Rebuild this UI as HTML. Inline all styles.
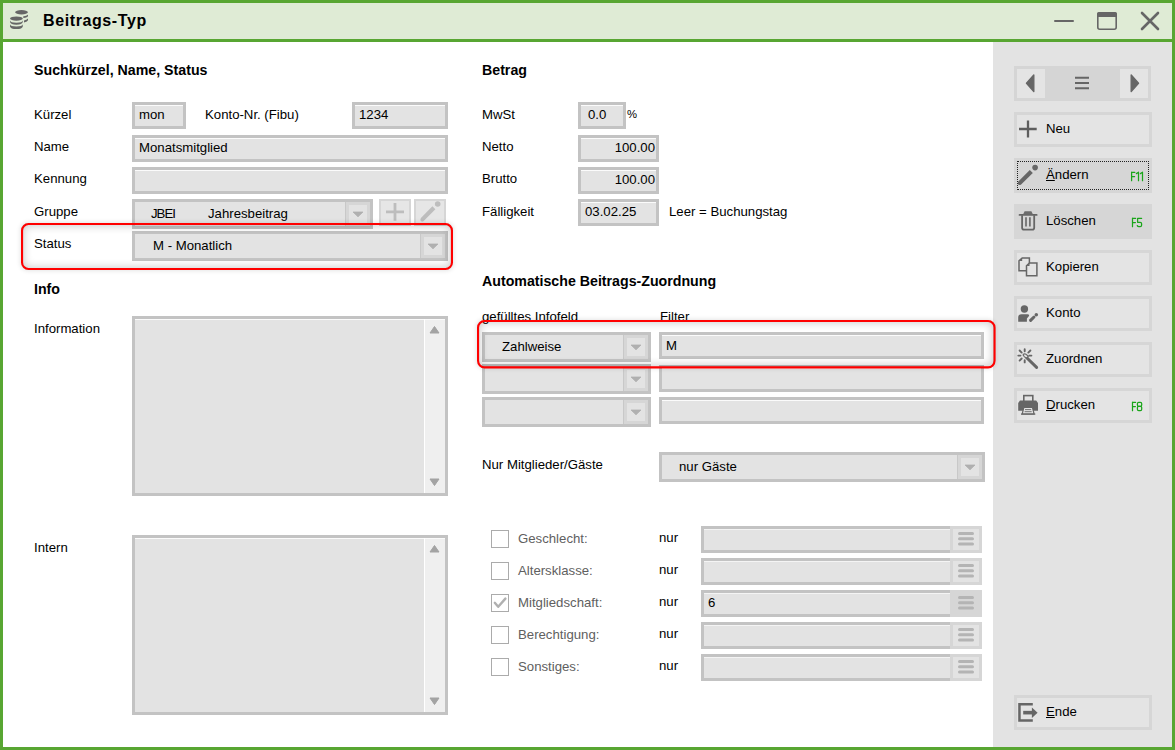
<!DOCTYPE html>
<html><head><meta charset="utf-8"><title>Beitrags-Typ</title>
<style>
*{box-sizing:border-box}
html,body{margin:0;padding:0;width:1175px;height:750px;overflow:hidden;background:#fff}
body{position:relative;font-family:"Liberation Sans",sans-serif}
.a{position:absolute}
.t{position:absolute;font-size:13.2px;line-height:16px;color:#000;white-space:nowrap}
.h{position:absolute;font-size:14.2px;line-height:16px;font-weight:bold;color:#000;white-space:nowrap}
.g{color:#606060}
.inp{position:absolute;border:3px solid #c3c3c3;background:#e3e3e3;box-shadow:inset 0 1px 0 #fbfbfb}
.cb{position:absolute;border:3px solid #c3c3c3;background:#e3e3e3}
.btn{position:absolute;background:#d6d6d6}
.btn i{position:absolute;left:3px;top:3px;right:3px;bottom:3px;background:#e3e3e3}
.sb{position:absolute;border:3px solid #d6d6d6;background:#e4e4e4}
.sb.p{background:#d6d6d6;border-color:#d6d6d6}
.k{position:absolute;width:18px;height:18px;border:1.5px solid #ababab;background:#fff}
.red{position:absolute;border:2.5px solid #ff0000;border-radius:7px;box-shadow:inset 0 0 5px 2px rgba(0,0,0,0.10),0 0 4px 1px rgba(0,0,0,0.06)}
</style></head><body>
<!-- window frame -->
<div class="a" style="left:0;top:0;width:1175px;height:750px;border:3px solid #58a632;border-top-width:3px"></div>
<div class="a" style="left:3px;top:3px;width:1169px;height:36px;background:#dfebd5"></div>
<div class="a" style="left:0;top:39px;width:1175px;height:3px;background:#58a632"></div>
<!-- sidebar -->
<div class="a" style="left:993px;top:42px;width:179px;height:705px;background:#e3e3e3"></div>

<div class="h" style="left:43px;top:10.5px;font-size:16px;line-height:20px;letter-spacing:0.6px">Beitrags-Typ</div>
<div class="h" style="left:34px;top:62px;">Suchkürzel, Name, Status</div>
<div class="t" style="left:34px;top:107px;">Kürzel</div>
<div class="inp" style="left:132px;top:102px;width:54px;height:27px;"></div>
<div class="t" style="left:139px;top:107px;">mon</div>
<div class="t" style="left:205px;top:107px;">Konto-Nr. (Fibu)</div>
<div class="inp" style="left:352px;top:102px;width:96px;height:27px;"></div>
<div class="t" style="left:359px;top:107px;">1234</div>
<div class="t" style="left:34px;top:139px;">Name</div>
<div class="inp" style="left:132px;top:135px;width:316px;height:27px;"></div>
<div class="t" style="left:139px;top:140px;">Monatsmitglied</div>
<div class="t" style="left:34px;top:171px;">Kennung</div>
<div class="inp" style="left:132px;top:167px;width:316px;height:27px;"></div>
<div class="t" style="left:34px;top:204px;">Gruppe</div>
<div class="cb" style="left:132px;top:199px;width:241px;height:30px;"></div>
<div class="a" style="left:345px;top:202px;width:1px;height:24px;background:#c8c8c8"></div>
<div class="btn" style="left:346px;top:202px;width:24px;height:24px"><i></i></div>
<svg class="a" style="left:352.0px;top:211.0px" width="12" height="6.8"><path d="M1 1 L11 1 L6.0 5.8 Z" fill="#b0b0b0" stroke="#b0b0b0" stroke-width="0.8" stroke-linejoin="round"/></svg>
<div class="t" style="left:151px;top:206px;letter-spacing:-1px">JBEI</div>
<div class="t" style="left:208px;top:206px;">Jahresbeitrag</div>
<div class="btn" style="left:379px;top:199px;width:32px;height:27px"><i style="left:2px;top:2px;right:2px;bottom:2px;background:#e6e6e6"></i></div>
<svg class="a" style="left:379px;top:199px" width="32" height="27"><path d="M7 12.9H25M16 4V21.8" stroke="#bdbdbd" stroke-width="2.8"/></svg>
<div class="btn" style="left:414px;top:199px;width:32px;height:27px"><i style="left:2px;top:2px;right:2px;bottom:2px;background:#e6e6e6"></i></div>
<svg class="a" style="left:414px;top:199px" width="32" height="27"><g transform="translate(2.6,-4.6)"><path d="M15.8 11.9L18.8 14.9L7.1 26.5Q5.2 27.6 4.2 26.6Q3.3 25.6 4.3 23.5Z" fill="#bdbdbd"/><circle cx="21.1" cy="9.6" r="2.8" fill="#bdbdbd"/></g></svg>
<div class="t" style="left:34px;top:236px;">Status</div>
<div class="cb" style="left:132px;top:231px;width:316px;height:30px;"></div>
<div class="a" style="left:420px;top:234px;width:1px;height:24px;background:#c8c8c8"></div>
<div class="btn" style="left:421px;top:234px;width:24px;height:24px"><i></i></div>
<svg class="a" style="left:427.0px;top:243.0px" width="12" height="6.8"><path d="M1 1 L11 1 L6.0 5.8 Z" fill="#b0b0b0" stroke="#b0b0b0" stroke-width="0.8" stroke-linejoin="round"/></svg>
<div class="t" style="left:153px;top:238px;">M - Monatlich</div>
<div class="h" style="left:34px;top:281px;">Info</div>
<div class="t" style="left:34px;top:321px;">Information</div>
<div class="inp" style="left:132px;top:316px;width:316px;height:180px;"></div>
<div class="a" style="left:424px;top:319px;width:1px;height:174px;background:#fff"></div>
<div class="a" style="left:425px;top:320px;width:20px;height:173px;background:#efefef"></div>
<svg class="a" style="left:429px;top:325px" width="11" height="9"><path d="M1 8L5.5 1.5L10 8Z" fill="#a3a3a3" stroke="#a3a3a3" stroke-width="1" stroke-linejoin="round"/></svg>
<svg class="a" style="left:429px;top:478px" width="11" height="9"><path d="M1 1L5.5 7.5L10 1Z" fill="#a3a3a3" stroke="#a3a3a3" stroke-width="1" stroke-linejoin="round"/></svg>
<div class="t" style="left:34px;top:540px;">Intern</div>
<div class="inp" style="left:132px;top:535px;width:316px;height:180px;"></div>
<div class="a" style="left:424px;top:538px;width:1px;height:174px;background:#fff"></div>
<div class="a" style="left:425px;top:539px;width:20px;height:173px;background:#efefef"></div>
<svg class="a" style="left:429px;top:544px" width="11" height="9"><path d="M1 8L5.5 1.5L10 8Z" fill="#a3a3a3" stroke="#a3a3a3" stroke-width="1" stroke-linejoin="round"/></svg>
<svg class="a" style="left:429px;top:697px" width="11" height="9"><path d="M1 1L5.5 7.5L10 1Z" fill="#a3a3a3" stroke="#a3a3a3" stroke-width="1" stroke-linejoin="round"/></svg>
<div class="h" style="left:482px;top:62px;">Betrag</div>
<div class="t" style="left:482px;top:107px;">MwSt</div>
<div class="inp" style="left:578px;top:102px;width:48px;height:27px;"></div>
<div class="t" style="left:588px;top:107px;">0.0</div>
<div class="t" style="left:627px;top:106px;font-size:11.3px">%</div>
<div class="t" style="left:482px;top:139px;">Netto</div>
<div class="inp" style="left:578px;top:135px;width:81px;height:27px;"></div>
<div class="t" style="left:578px;top:140px;width:77px;text-align:right">100.00</div>
<div class="t" style="left:482px;top:171px;">Brutto</div>
<div class="inp" style="left:578px;top:167px;width:81px;height:27px;"></div>
<div class="t" style="left:578px;top:172px;width:77px;text-align:right">100.00</div>
<div class="t" style="left:482px;top:204px;">Fälligkeit</div>
<div class="inp" style="left:578px;top:199px;width:81px;height:27px;"></div>
<div class="t" style="left:585px;top:204px;">03.02.25</div>
<div class="t" style="left:669px;top:204px;">Leer = Buchungstag</div>
<div class="h" style="left:482px;top:273px;">Automatische Beitrags-Zuordnung</div>
<div class="t" style="left:482px;top:309px;">gefülltes Infofeld</div>
<div class="t" style="left:660px;top:309px;">Filter</div>
<div class="cb" style="left:482px;top:332px;width:169px;height:30px;"></div>
<div class="a" style="left:623px;top:335px;width:1px;height:24px;background:#c8c8c8"></div>
<div class="btn" style="left:624px;top:335px;width:24px;height:24px"><i></i></div>
<svg class="a" style="left:630.0px;top:344.0px" width="12" height="6.8"><path d="M1 1 L11 1 L6.0 5.8 Z" fill="#b0b0b0" stroke="#b0b0b0" stroke-width="0.8" stroke-linejoin="round"/></svg>
<div class="t" style="left:502px;top:339px;">Zahlweise</div>
<div class="inp" style="left:659px;top:332px;width:325px;height:27px;"></div>
<div class="t" style="left:666px;top:338px;">M</div>
<div class="cb" style="left:482px;top:364px;width:169px;height:30px;"></div>
<div class="a" style="left:623px;top:367px;width:1px;height:24px;background:#c8c8c8"></div>
<div class="btn" style="left:624px;top:367px;width:24px;height:24px"><i></i></div>
<svg class="a" style="left:630.0px;top:376.0px" width="12" height="6.8"><path d="M1 1 L11 1 L6.0 5.8 Z" fill="#b0b0b0" stroke="#b0b0b0" stroke-width="0.8" stroke-linejoin="round"/></svg>
<div class="inp" style="left:659px;top:365px;width:325px;height:27px;"></div>
<div class="cb" style="left:482px;top:397px;width:169px;height:30px;"></div>
<div class="a" style="left:623px;top:400px;width:1px;height:24px;background:#c8c8c8"></div>
<div class="btn" style="left:624px;top:400px;width:24px;height:24px"><i></i></div>
<svg class="a" style="left:630.0px;top:409.0px" width="12" height="6.8"><path d="M1 1 L11 1 L6.0 5.8 Z" fill="#b0b0b0" stroke="#b0b0b0" stroke-width="0.8" stroke-linejoin="round"/></svg>
<div class="inp" style="left:659px;top:397px;width:325px;height:27px;"></div>
<div class="t" style="left:482px;top:457px;">Nur Mitglieder/Gäste</div>
<div class="cb" style="left:659px;top:452px;width:326px;height:30px;"></div>
<div class="a" style="left:957px;top:455px;width:1px;height:24px;background:#c8c8c8"></div>
<div class="btn" style="left:958px;top:455px;width:24px;height:24px"><i></i></div>
<svg class="a" style="left:964.0px;top:464.0px" width="12" height="6.8"><path d="M1 1 L11 1 L6.0 5.8 Z" fill="#b0b0b0" stroke="#b0b0b0" stroke-width="0.8" stroke-linejoin="round"/></svg>
<div class="t" style="left:679px;top:459px;">nur Gäste</div>
<div class="k" style="left:491px;top:530px"></div>
<div class="t g" style="left:518px;top:531px;">Geschlecht:</div>
<div class="t" style="left:659px;top:530px;">nur</div>
<div class="a" style="left:701px;top:526px;width:249px;height:27px;border:3px solid #c3c3c3;border-right:0;background:#e3e3e3;box-shadow:inset 0 1px 0 #f4f4f4"></div>
<div class="btn" style="left:950px;top:526px;width:32px;height:27px"><i></i></div>
<svg class="a" style="left:950px;top:526px" width="32" height="27"><path d="M9.5 7.5H22.5M9.5 12.8H22.5M9.5 18H22.5" stroke="#b4b4b4" stroke-width="3" stroke-linecap="round"/></svg>
<div class="k" style="left:491px;top:562px"></div>
<div class="t g" style="left:518px;top:563px;">Altersklasse:</div>
<div class="t" style="left:659px;top:562px;">nur</div>
<div class="a" style="left:701px;top:558px;width:249px;height:27px;border:3px solid #c3c3c3;border-right:0;background:#e3e3e3;box-shadow:inset 0 1px 0 #f4f4f4"></div>
<div class="btn" style="left:950px;top:558px;width:32px;height:27px"><i></i></div>
<svg class="a" style="left:950px;top:558px" width="32" height="27"><path d="M9.5 7.5H22.5M9.5 12.8H22.5M9.5 18H22.5" stroke="#b4b4b4" stroke-width="3" stroke-linecap="round"/></svg>
<div class="k" style="left:491px;top:594px"></div>
<div class="t g" style="left:518px;top:595px;">Mitgliedschaft:</div>
<div class="t" style="left:659px;top:594px;">nur</div>
<div class="a" style="left:701px;top:590px;width:249px;height:27px;border:3px solid #c3c3c3;border-right:0;background:#e3e3e3;box-shadow:inset 0 1px 0 #f4f4f4"></div>
<div class="btn" style="left:950px;top:590px;width:32px;height:27px"></div>
<svg class="a" style="left:950px;top:590px" width="32" height="27"><path d="M9.5 7.5H22.5M9.5 12.8H22.5M9.5 18H22.5" stroke="#b4b4b4" stroke-width="3" stroke-linecap="round"/></svg>
<svg class="a" style="left:491px;top:594px" width="18" height="18"><path d="M3.8 8.8L7.2 12.8L14.4 4.6" fill="none" stroke="#b0b0b0" stroke-width="2.4" stroke-linecap="round" stroke-linejoin="round"/></svg>
<div class="t" style="left:708px;top:595px;">6</div>
<div class="k" style="left:491px;top:626px"></div>
<div class="t g" style="left:518px;top:627px;">Berechtigung:</div>
<div class="t" style="left:659px;top:626px;">nur</div>
<div class="a" style="left:701px;top:622px;width:249px;height:27px;border:3px solid #c3c3c3;border-right:0;background:#e3e3e3;box-shadow:inset 0 1px 0 #f4f4f4"></div>
<div class="btn" style="left:950px;top:622px;width:32px;height:27px"><i></i></div>
<svg class="a" style="left:950px;top:622px" width="32" height="27"><path d="M9.5 7.5H22.5M9.5 12.8H22.5M9.5 18H22.5" stroke="#b4b4b4" stroke-width="3" stroke-linecap="round"/></svg>
<div class="k" style="left:491px;top:658px"></div>
<div class="t g" style="left:518px;top:659px;">Sonstiges:</div>
<div class="t" style="left:659px;top:658px;">nur</div>
<div class="a" style="left:701px;top:654px;width:249px;height:27px;border:3px solid #c3c3c3;border-right:0;background:#e3e3e3;box-shadow:inset 0 1px 0 #f4f4f4"></div>
<div class="btn" style="left:950px;top:654px;width:32px;height:27px"><i></i></div>
<svg class="a" style="left:950px;top:654px" width="32" height="27"><path d="M9.5 7.5H22.5M9.5 12.8H22.5M9.5 18H22.5" stroke="#b4b4b4" stroke-width="3" stroke-linecap="round"/></svg>
<div class="a" style="left:21.4px;top:222.6px;width:432.0px;height:47.00000000000003px;border-radius:7px;box-shadow:inset 0 0 9px 3px rgba(0,0,0,0.2),0 0 4px 1px rgba(0,0,0,0.10)"></div>
<svg class="a" style="left:21.4px;top:222.6px;overflow:visible" width="432.0" height="47.00000000000003"><rect x="1.05" y="1.05" width="429.9" height="44.90000000000003" rx="6.5" ry="6.5" fill="none" stroke="#ff0000" stroke-width="2.1"/></svg>
<div class="a" style="left:476.8px;top:319.8px;width:518.5999999999999px;height:48.39999999999998px;border-radius:7px;box-shadow:inset 0 0 9px 3px rgba(0,0,0,0.2),0 0 4px 1px rgba(0,0,0,0.10)"></div>
<svg class="a" style="left:476.8px;top:319.8px;overflow:visible" width="518.5999999999999" height="48.39999999999998"><rect x="1.05" y="1.05" width="516.4999999999999" height="46.299999999999976" rx="6.5" ry="6.5" fill="none" stroke="#ff0000" stroke-width="2.1"/></svg>
<svg class="a" style="left:8px;top:8px" width="24" height="24" fill="#666">
<ellipse cx="13.5" cy="4.25" rx="6.4" ry="2.2"/>
<path d="M15.3 8.3 Q19.6 7.7 20 6.5 L20 8 Q19.7 9.4 15.3 10.1Z"/>
<path d="M16 12.4 Q19.6 11.6 20 10.5 L20 12.2 Q19.7 13.6 16 14.4Z"/>
<ellipse cx="8.4" cy="10.6" rx="6.4" ry="2.1"/>
<path d="M2 12.4 Q2.5 14.5 8.4 14.7 Q14.3 14.5 14.8 12.4 L14.8 14.1 Q14.3 16.6 8.4 16.8 Q2.5 16.6 2 14.1Z"/>
<path d="M2 16.3 Q2.5 18.4 8.4 18.6 Q14.3 18.4 14.8 16.3 L14.8 18.4 Q14.3 20.9 8.4 21.1 Q2.5 20.9 2 18.4Z"/>
</svg>
<div class="a" style="left:1054px;top:20px;width:20px;height:2px;background:#666;border-radius:1px"></div>
<svg class="a" style="left:1096px;top:11px" width="22" height="20"><rect x="1.8" y="1.8" width="18.4" height="16.4" rx="2" fill="none" stroke="#666" stroke-width="1.6"/><rect x="1" y="1" width="20" height="5" rx="2" fill="#666"/><rect x="1" y="4" width="20" height="2" fill="#666"/></svg>
<svg class="a" style="left:1139px;top:10px" width="22" height="22"><path d="M3 3L19 19M19 3L3 19" stroke="#666" stroke-width="2.6" stroke-linecap="round"/></svg>
<div class="a" style="left:1014px;top:66px;width:137px;height:35px;background:#d5d5d5"></div>
<div class="a" style="left:1017px;top:69px;width:28px;height:29px;background:#e4e4e4"></div>
<div class="a" style="left:1120px;top:69px;width:28px;height:29px;background:#e4e4e4"></div>
<svg class="a" style="left:1024px;top:73px" width="12" height="20"><path d="M9.8 2L2.5 10.3L9.8 18.5Z" fill="#666" stroke="#666" stroke-width="1.4" stroke-linejoin="round"/></svg>
<svg class="a" style="left:1129px;top:73px" width="12" height="20"><path d="M2.2 2L9.5 10.3L2.2 18.5Z" fill="#666" stroke="#666" stroke-width="1.4" stroke-linejoin="round"/></svg>
<svg class="a" style="left:1074px;top:76px" width="16" height="14"><path d="M1 1.8H15M1 7H15M1 12.2H15" stroke="#666" stroke-width="1.9"/></svg>
<div class="sb" style="left:1014px;top:112px;width:138px;height:35px"></div>
<svg class="a" style="left:1014px;top:112px" width="30" height="35"><path d="M5 17H22.7M14 8.4V25.6" stroke="#5e5e5e" stroke-width="2.3"/></svg>
<div class="t" style="left:1046px;top:121px;">Neu</div>
<div class="a" style="left:1014px;top:158px;width:138px;height:35px;background:#d6d6d6"></div>
<div class="a" style="left:1017px;top:161px;width:132px;height:29px;border:1px dotted #222"></div>
<svg class="a" style="left:1014px;top:158px" width="30" height="35"><path d="M15.8 11.9L18.8 14.9L7.1 26.5Q5.2 27.6 4.2 26.6Q3.3 25.6 4.3 23.5Z" fill="#666"/><circle cx="21.1" cy="9.6" r="2.8" fill="#666"/></svg>
<div class="t" style="left:1046px;top:167px;"><span style="text-decoration:underline">Ä</span>ndern</div>
<svg class="a" style="left:1129px;top:169.5px" width="16" height="13"><path d="M2.6 2.2V10.7M2.6 2.4H5.8M2.6 6.5H5.6" stroke="#1aa51a" stroke-width="1.25" fill="none" stroke-linecap="round" stroke-linejoin="round"/><path d="M9.5 2.2V10.7M7.4 3.6L9.5 2.3M13.5 2.2V10.7M11.4 3.6L13.5 2.3" stroke="#1aa51a" stroke-width="1.25" fill="none" stroke-linecap="round" stroke-linejoin="round"/></svg>
<div class="sb p" style="left:1014px;top:204px;width:138px;height:35px"></div>
<svg class="a" style="left:1014px;top:204px" width="30" height="35"><path d="M8.1 11.2V23.8Q8.1 25.7 10 25.7H18.3Q20.2 25.7 20.2 23.8V11.2" fill="none" stroke="#666" stroke-width="1.8"/><path d="M5.6 10.9H22.6" stroke="#666" stroke-width="1.9" stroke-linecap="round"/><path d="M9 10.4L10.6 7.2H17.4L19 10.4Z" fill="#6c6c6c"/><path d="M12 13.2V22.6M15.9 13.2V22.6" stroke="#666" stroke-width="1.6"/></svg>
<div class="t" style="left:1046px;top:213px;">Löschen</div>
<svg class="a" style="left:1130px;top:215.5px" width="16" height="13"><path d="M2.5 2.2V10.7M2.5 2.4H5.6M2.5 6.5H5.4" stroke="#1aa51a" stroke-width="1.25" fill="none" stroke-linecap="round" stroke-linejoin="round"/><path d="M11.6 2.4H7.6V6.3H10.2Q11.6 6.3 11.6 7.7V9.2Q11.6 10.6 10.2 10.6H8.8Q7.8 10.6 7.3 9.6" stroke="#1aa51a" stroke-width="1.25" fill="none" stroke-linecap="round" stroke-linejoin="round"/></svg>
<div class="sb" style="left:1014px;top:250px;width:138px;height:35px"></div>
<svg class="a" style="left:1014px;top:250px" width="30" height="35"><path d="M5 10.8L8.2 7.9H15.4V20.8H5Z" fill="none" stroke="#666" stroke-width="1.5"/><path d="M5.2 11L8.2 8.2V11Z" fill="#666"/><path d="M12.5 15.8L15.5 12.9H22.9V25.8H12.5Z" fill="#e4e4e4" stroke="#666" stroke-width="1.5"/><path d="M12.7 16L15.5 13.2V16Z" fill="#666"/></svg>
<div class="t" style="left:1046px;top:259px;">Kopieren</div>
<div class="sb" style="left:1014px;top:296px;width:138px;height:35px"></div>
<svg class="a" style="left:1014px;top:296px" width="30" height="35"><circle cx="10.4" cy="13" r="3.7" fill="#666"/><path d="M4.2 25.7V21.5Q4.2 18.2 7.5 18.2H13.6Q15.9 18.5 14.8 20.2L12.9 22.4V25.7Z" fill="#666"/><path d="M16.6 24.4L20 21" stroke="#666" stroke-width="3" stroke-linecap="round"/><circle cx="22.3" cy="18.7" r="1.75" fill="#666"/></svg>
<div class="t" style="left:1046px;top:305px;">Konto</div>
<div class="sb" style="left:1014px;top:342px;width:138px;height:35px"></div>
<svg class="a" style="left:1014px;top:342px" width="30" height="35"><path d="M13 16L22.6 25.4" stroke="#666" stroke-width="3" stroke-linecap="round"/><path d="M9.3 12.2Q11.3 11 13.3 13.3L14.2 14.6L12.3 16.2L10.3 14.6Q8.6 13.1 9.3 12.2Z" fill="#e4e4e4" stroke="#666" stroke-width="1.2"/><path d="M10.7 7.2V9.3M4.3 13.6H6.5M15.2 13.6H17.4M10.7 18.3V20.4M5.6 8.5L7.7 10.6M16.4 8.5L14.3 10.6M5.6 18.6L7.7 16.5" stroke="#666" stroke-width="1.9" stroke-linecap="round"/></svg>
<div class="t" style="left:1046px;top:351px;">Zuordnen</div>
<div class="sb" style="left:1014px;top:388px;width:138px;height:35px"></div>
<svg class="a" style="left:1014px;top:388px" width="30" height="35"><rect x="9.8" y="7.6" width="9" height="7" fill="none" stroke="#666" stroke-width="1.6"/><path d="M4.2 15L6 12.5H22.2L24 15V22.8H4.2Z" fill="#666"/><path d="M8.2 26L9.8 19.5H18.5L20.1 26Z" fill="#e4e4e4" stroke="#666" stroke-width="1.2" stroke-linejoin="round"/><path d="M7 26.1H21.3" stroke="#666" stroke-width="1.3"/><path d="M11 21.6H17.2M10.6 23.7H17.7" stroke="#666" stroke-width="0.9"/></svg>
<div class="t" style="left:1046px;top:397px;"><span style="text-decoration:underline">D</span>rucken</div>
<svg class="a" style="left:1130px;top:399.5px" width="16" height="13"><path d="M2.5 2.2V10.7M2.5 2.4H5.6M2.5 6.5H5.4" stroke="#1aa51a" stroke-width="1.25" fill="none" stroke-linecap="round" stroke-linejoin="round"/><rect x="7.4" y="2.4" width="4.3" height="3.9" rx="1.3" stroke="#1aa51a" stroke-width="1.25" fill="none" stroke-linecap="round" stroke-linejoin="round"/><rect x="7.4" y="6.3" width="4.3" height="4.3" rx="1.3" stroke="#1aa51a" stroke-width="1.25" fill="none" stroke-linecap="round" stroke-linejoin="round"/></svg>
<div class="sb" style="left:1014px;top:695px;width:138px;height:35px"></div>
<svg class="a" style="left:1014px;top:695px" width="30" height="35"><path d="M18.8 9.3H5.45V25.6H18.8" fill="none" stroke="#666" stroke-width="2.5"/><path d="M9.2 17.65H18.5" stroke="#666" stroke-width="3.6"/><path d="M17.9 12.4L23.6 17.65L17.9 22.9Z" fill="#666"/></svg>
<div class="t" style="left:1046px;top:704px;"><span style="text-decoration:underline">E</span>nde</div>
</body></html>
